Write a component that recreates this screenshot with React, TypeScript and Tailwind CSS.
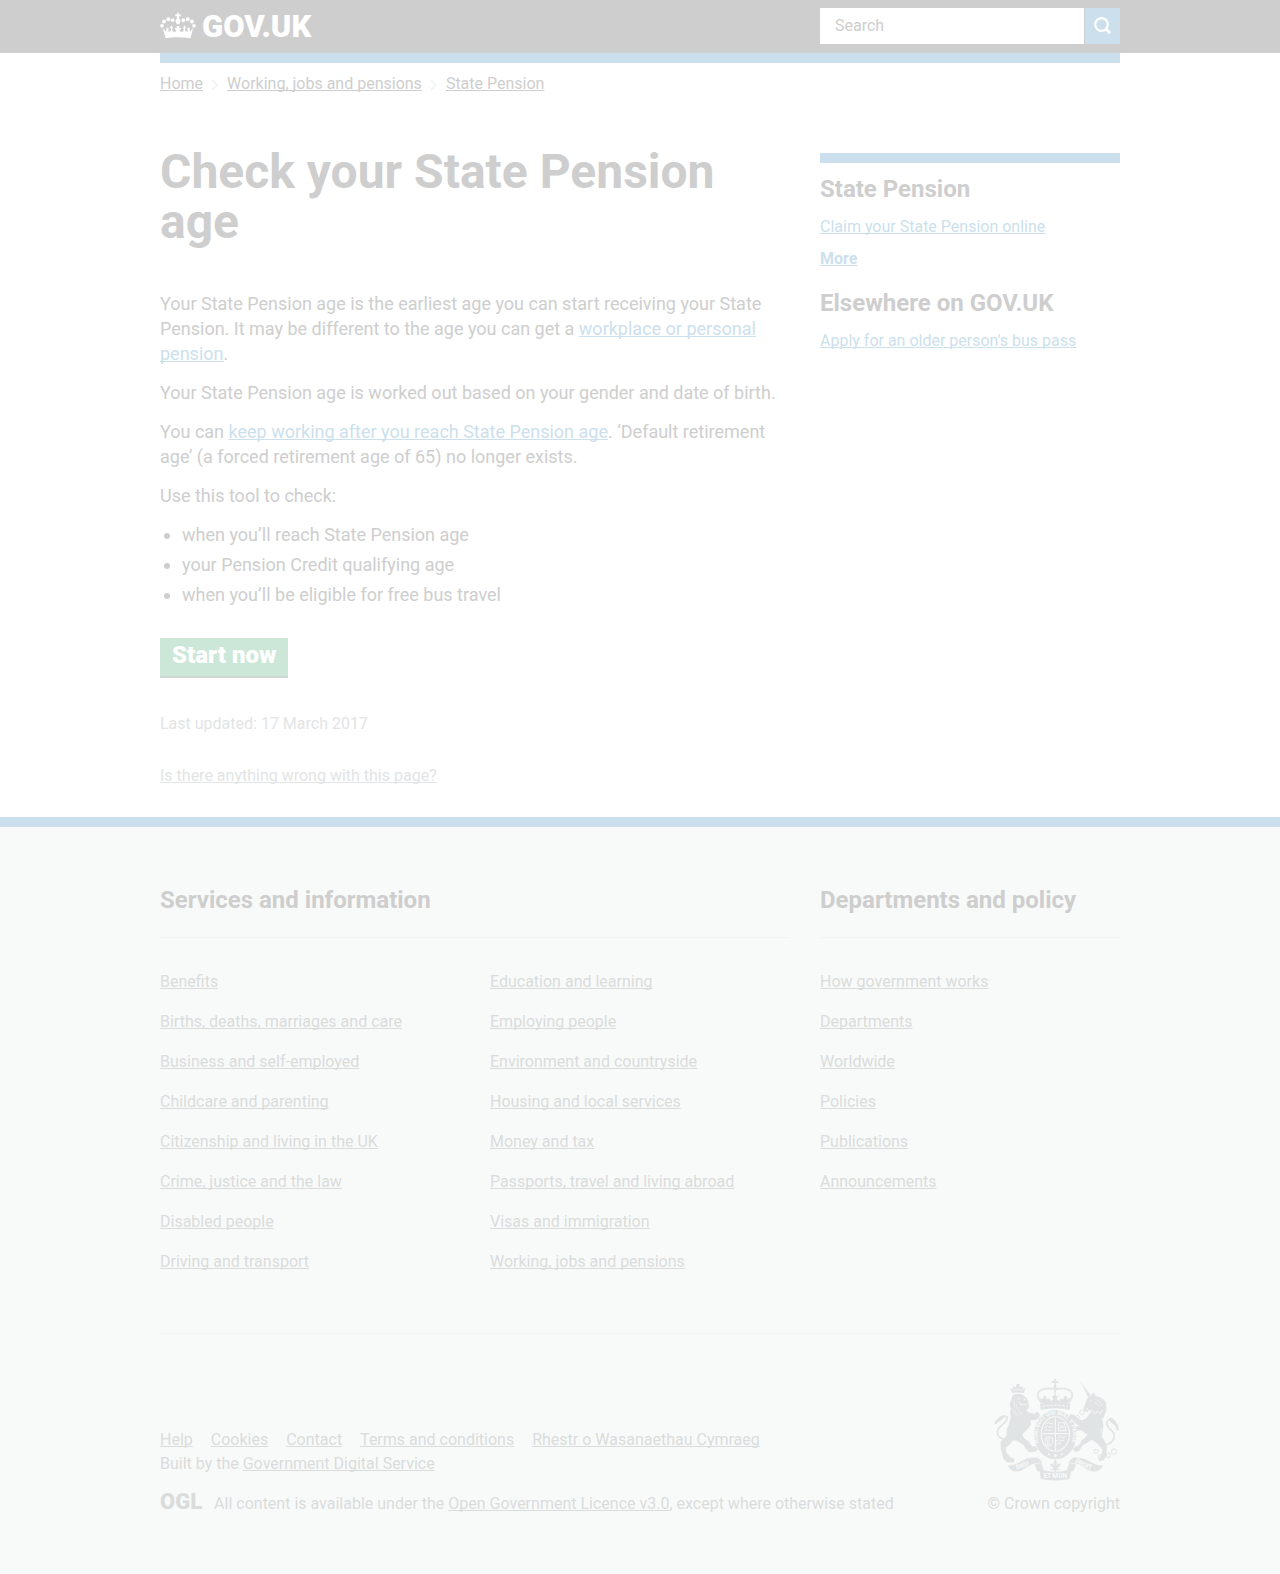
import React from 'react';
import type { ReactNode } from 'react';

const services: string[] = [
  'Benefits',
  'Births, deaths, marriages and care',
  'Business and self-employed',
  'Childcare and parenting',
  'Citizenship and living in the UK',
  'Crime, justice and the law',
  'Disabled people',
  'Driving and transport',
];

const moreServices: string[] = [
  'Education and learning',
  'Employing people',
  'Environment and countryside',
  'Housing and local services',
  'Money and tax',
  'Passports, travel and living abroad',
  'Visas and immigration',
  'Working, jobs and pensions',
];

const departments: string[] = [
  'How government works',
  'Departments',
  'Worldwide',
  'Policies',
  'Publications',
  'Announcements',
];

const metaLinks: string[] = ['Help', 'Cookies', 'Contact', 'Terms and conditions', 'Rhestr o Wasanaethau Cymraeg'];

function Container({ children }: { children: ReactNode }) {
  return <div className="mx-auto max-w-[960px]">{children}</div>;
}

function A({ children, className = '' }: { children: ReactNode; className?: string }) {
  return (
    <a href="#" className={`underline underline-offset-1 [text-decoration-skip-ink:none] ${className}`}>
      {children}
    </a>
  );
}

function Crown() {
  return (
    <svg viewBox="0 0 108 80" className="h-[27px] w-9" fill="#fff" aria-hidden="true">
      <path d="M51 2h6l-1 5 6-1v7l-6-1 2 8c4 3 4 9 1 13l-2 3h-6l-2-3c-3-4-3-10 1-13l2-8-6 1V6l6 1z" />
      <circle cx="38" cy="24" r="5.5" />
      <circle cx="25" cy="21" r="6" />
      <circle cx="12" cy="28" r="6" />
      <circle cx="6" cy="41" r="5.5" />
      <circle cx="70" cy="24" r="5.5" />
      <circle cx="83" cy="21" r="6" />
      <circle cx="96" cy="28" r="6" />
      <circle cx="102" cy="41" r="5.5" />
      <path d="M8 47l9 11 3-11 6 0-1 12 7-2 1-7-3-3 4-8 5 8-3 4 3 8 8 0 2-6-4-1v-5l6 1-2-6h10l-2 6 6-1v5l-4 1 2 6 8 0 3-8-3-4 5-8 4 8-3 3 1 7 7 2-1-12h6l3 11 9-11-9 31c-25-4-53-4-74 0z" />
    </svg>
  );
}

function Crest() {
  const bg = '#f8faf9';
  const ink = '#e1e4e4';
  return (
    <svg viewBox="42 24 381 312" className="h-[104px] w-[127px]" fill={ink} role="img" aria-label="Royal coat of arms">
      <defs>
        <path id="garter" d="M190 238A53 62 0 1 1 268 238" />
        <path id="dieu" d="M99 301Q134 297 164 274" />
        <path id="droit" d="M286 274Q318 297 356 301" />
      </defs>

      {/* lion */}
      <path d="M100 70l-6-16 8 3 1-9 8 4 2-10h8l2 10 8-4 1 9 8-3-6 16q-17-5-34 0z" />
      <path d="M102 61q15-4 30-1" stroke={bg} strokeWidth="2" fill="none" />
      <path
        stroke={ink}
        strokeWidth="5"
        strokeLinejoin="round"
        d="M103 77q14-6 28 0l9 8 6 12-3 6 5 3-2 9-8 3q2 8 10 12l18 4 8-5 6 5-2 7-10 7-18-3q5 8 3 18l-10 14-14 12q-2 10 4 17l16 12 9 14 10-1 5 6-3 5-18 2-10-9-6-12-24-14-10-1-10 12-14 12 2 16 12 16 11 3v8H85l-9-9-8-30-1-16 4-8 14-14q-2-20 7-34l6-22q-4-14 0-26l-3-14z"
      />
      <path d="M114 84l9 3m10 0l6 1m-20 7l4 7 10 3 8-2" stroke={bg} strokeWidth="2.5" fill="none" />
      <path d="M106 92q-4 12 2 20m3-12q0 12 7 17m-14 4q4 10 12 14m3-13q4 7 11 10" stroke={bg} strokeWidth="1.5" fill="none" />
      <path d="M88 207q-25 3-32-14-4-15 12-27 17-13 17-24-4-7-15 0-14 9-20 18" stroke={ink} strokeWidth="5" fill="none" />
      <path d="M44 166q4-15 16-24 8-6 17-7-1 10-10 15-12 6-23 16z" />

      {/* unicorn */}
      <path d="M303 33l32 42-8 5z" />
      <path d="M309 48l4-4m0 10l5-4m0 10l5-4m0 11l5-4" stroke={bg} strokeWidth="1.5" />
      <path
        stroke={ink}
        strokeWidth="4"
        strokeLinejoin="round"
        d="M328 83l8-4 8-9 3 9q20 3 31 17 3 12 2 24l-6 17q-3 7-8 10 8 14 4 32l-4 20 10 16 6 18-3 24-6 12-11 3-2-6 8-8 4-20-14-18-20-14-12 10-16 8-10 16-10 4-6-6 5-6 11-4 10-16 12-10 6-10q-12-4-18-14l-14 2-12 8-8-6 2-6 7 0 12-6 8-6-10-2-14-14-10-6 4-7 9 1 10 10 14 8 16-8 12-18 4-12-8 4-8 5-7-3-1-8z"
      />
      <path d="M324 115l9 12 7-6 7 11 8-9 7 8 10-10" stroke={bg} strokeWidth="3" fill="none" />
      <circle cx="334" cy="91" r="2" fill={bg} />
      <path d="M349 88q14 5 22 20m-26-11q12 4 18 14" stroke={bg} strokeWidth="1.5" fill="none" />
      <path d="M374 222q18 4 28-12 10-14-3-27-16-14-16-25 4-12 16-5 14 11 17 28" stroke={ink} strokeWidth="5" fill="none" />
      <path d="M388 146q10-8 20 6 12 13 12 30-8-14-18-20-9-6-14-16z" />
      <g fill="none" stroke={ink} strokeWidth="3">
        <circle cx="309" cy="127" r="7" />
        <circle cx="296" cy="141" r="5" />
        <circle cx="372" cy="181" r="6" stroke={bg} strokeWidth="2" />
        <circle cx="351" cy="244" r="6" />
        <circle cx="364" cy="260" r="6" />
        <circle cx="388" cy="256" r="7" />
        <circle cx="405" cy="245" r="8" />
      </g>

      {/* imperial crown */}
      <path d="M225 27h6l-1 7 8-1v7l-8-1 1 7q4 5 0 10h-6q-4-5 0-10l1-7-8 1v-7l8 1z" />
      <path d="M188 98q-20-22-6-35 16-12 46-5 30-7 46 5 14 13-6 35" stroke={ink} strokeWidth="6" strokeDasharray="5 1" fill="none" />
      <path d="M228 56v24" stroke={ink} strokeWidth="6" strokeDasharray="5 1" />
      <path d="M186 99l-3-16 8 5 2-9 8 0 2 9 8-3 4 8 8-5-5-10h20l-5 10 8 5 4-8 8 3 2-9h8l2 9 8-5-3 16z" />
      <path d="M183 101q45-10 91 0l-2 18q-44-9-87 0z" />
      <path d="M190 109q38-7 77 0" stroke={bg} strokeWidth="3" strokeDasharray="8 4" fill="none" />

      {/* garter and shield */}
      <ellipse cx="229" cy="194" rx="64" ry="74" />
      <ellipse cx="229" cy="192" rx="44" ry="53" fill={bg} />
      <ellipse cx="229" cy="192" rx="41" ry="50" />
      <text fill={bg} fontFamily="Roboto, sans-serif" fontWeight="700" fontSize="17" textAnchor="middle">
        <textPath href="#garter" startOffset="50%">HONI SOIT QUI MAL Y PENSE</textPath>
      </text>
      <path d="M229 143v98M189 191h80" stroke={bg} strokeWidth="3" />
      <path
        d="M200 163l8-6 5 5 10-3m-27 14l9-5 6 4 11-3m-25 14l8-5 6 4 9-3m16 25l8-6 5 5 10-3m-29 14l9-5 6 4 10-3m-23 14l8-5 6 4"
        stroke={bg}
        strokeWidth="2.5"
        fill="none"
      />
      <path d="M239 158h16l7 24h-23zM244 178l4-13 7 11" stroke={bg} strokeWidth="2.5" fill="none" />
      <path d="M198 202q10-3 22 0v16q-3 9-11 13-9-5-11-13zM204 203l2 24m5-25l-1 25" stroke={bg} strokeWidth="2.5" fill="none" />
      <circle cx="210" cy="253" r="3" fill={bg} />
      <circle cx="229" cy="257" r="4" fill={bg} />
      <circle cx="248" cy="253" r="3" fill={bg} />

      {/* motto ribbon */}
      <path d="M84 286q20 2 42-12 22-14 50-12l16 16-14 2q-20 0-37 14-18 14-38 10-12-6-19-18z" stroke={bg} />
      <path d="M374 286q-20 2-42-12-22-14-50-12l-16 16 14 2q20 0 37 14 18 14 38 10 12-6 19-18z" stroke={bg} />
      <path d="M166 283l22-5 6 22q35 9 70 0l6-22 22 5-8 20-8 2-3 22q-44 10-88 0l-3-22-8-2z" stroke={bg} />
      <path d="M229 266q8 10 3 19 5-8 12-3 3 8-8 10v4h8v4h-10l-5 8-5-8h-10v-4h8v-4q-11-2-8-10 7-5 12 3-5-9 3-19z" stroke={bg} />
      <g fill={bg} fontFamily="Roboto, sans-serif" fontWeight="700" fontSize="19">
        <text>
          <textPath href="#dieu" startOffset="14">DIEU</textPath>
        </text>
        <text>
          <textPath href="#droit" startOffset="2">DROIT</textPath>
        </text>
        <text x="229" y="325" textAnchor="middle">ET MON</text>
      </g>
    </svg>
  );
}

function LinkList({ items, label }: { items: string[]; label: string }) {
  return (
    <ul aria-label={label} className="flex flex-col gap-5 text-base leading-5 text-[#dadcdc]">
      {items.map((item) => (
        <li key={item}>
          <A>{item}</A>
        </li>
      ))}
    </ul>
  );
}

export default function App() {
  return (
    <div className="min-h-screen bg-white font-[Roboto,sans-serif] text-[#cecece]">
      <header className="bg-[#cecece]">
        <Container>
          <div className="grid h-[53px] grid-cols-3 gap-[30px]">
            <a href="#" className="col-span-2 flex items-start gap-1.5 pt-3 text-white">
              <Crown />
              <span className="text-[31px] leading-[29px] font-black">GOV.UK</span>
            </a>
            <form className="flex h-11 gap-px pt-2" role="search" onSubmit={(e) => e.preventDefault()}>
              <input
                type="search"
                aria-label="Search"
                placeholder="Search"
                className="min-w-0 flex-1 bg-white px-[15px] text-base text-[#aaa] outline-none placeholder:text-[#cecece]"
              />
              <button type="submit" aria-label="Search GOV.UK" className="flex w-[35px] items-center justify-center bg-[#ccdfed]">
                <svg viewBox="0 0 18 18" className="size-[18px]" fill="none" stroke="#fff" aria-hidden="true">
                  <circle cx="7.5" cy="7.5" r="6.3" strokeWidth="2.2" />
                  <path d="M11.8 11.8l4.4 4.4" strokeWidth="3" />
                </svg>
              </button>
            </form>
          </div>
        </Container>
      </header>

      <Container>
        <div className="h-2.5 bg-[#ccdfed]" />
        <nav aria-label="Breadcrumb" className="pt-[11px]">
          <ol className="flex text-base leading-5">
            {['Home', 'Working, jobs and pensions', 'State Pension'].map((crumb, i) => (
              <li key={crumb} className="flex items-center">
                {i > 0 && (
                  <svg viewBox="0 0 8 12" className="mx-2 mt-0.5 h-3 w-2" fill="none" stroke="#f2f3f3" strokeWidth="1.5" aria-hidden="true">
                    <path d="M1 1l5 5-5 5" />
                  </svg>
                )}
                <A>{crumb}</A>
              </li>
            ))}
          </ol>
        </nav>

        <div className="grid grid-cols-3 gap-[30px] pt-[53px] pb-[31px]">
          <main className="col-span-2">
            <h1 className="pr-[30px] text-[48px] leading-[50px] font-bold">Check your State Pension age</h1>
            <div className="mt-11 flex flex-col gap-3.5 text-lg leading-[25px]">
              <p>
                Your State Pension age is the earliest age you can start receiving your State Pension. It may be
                different to the age you can get a <A className="text-[#ccdfed]">workplace or personal pension</A>.
              </p>
              <p>Your State Pension age is worked out based on your gender and date of birth.</p>
              <p>
                You can <A className="text-[#ccdfed]">keep working after you reach State Pension age</A>. ‘Default
                retirement age’ (a forced retirement age of 65) no longer exists.
              </p>
              <p>Use this tool to check:</p>
              <ul className="flex list-disc flex-col gap-[5px] pl-[22px]">
                <li>when you’ll reach State Pension age</li>
                <li>your Pension Credit qualifying age</li>
                <li>when you’ll be eligible for free bus travel</li>
              </ul>
            </div>
            <button
              type="button"
              className="mt-[31px] block h-10 border-b-2 border-[#cdd6d1] bg-[#cce7d8] px-3 pb-1 text-2xl leading-[30px] font-black text-white"
            >
              Start now
            </button>
            <div className="flex flex-col gap-8 pt-9 text-base leading-5 text-[#e2e4e5]">
              <p>Last updated: 17 March 2017</p>
              <p>
                <A>Is there anything wrong with this page?</A>
              </p>
            </div>
          </main>

          <aside className="mt-1.5 self-start border-t-[10px] border-[#ccdfed] pt-[11px] text-base leading-5">
            <h2 className="text-2xl leading-[30px] font-bold">State Pension</h2>
            <ul className="mt-[13px] flex flex-col gap-3 text-[#ccdfed]">
              <li>
                <A>Claim your State Pension online</A>
              </li>
              <li>
                <A className="font-bold">More</A>
              </li>
            </ul>
            <h2 className="mt-[19px] text-2xl leading-[30px] font-bold">Elsewhere on GOV.UK</h2>
            <p className="mt-[13px] text-[#ccdfed]">
              <A>Apply for an older person's bus pass</A>
            </p>
          </aside>
        </div>
      </Container>

      <footer className="border-t-[10px] border-[#ccdfed] bg-[#f8faf9] pb-[60px]">
        <Container>
          <div className="grid grid-cols-3 gap-x-[30px] pt-[58px]">
            <section className="col-span-2">
              <h2 className="border-b border-[#f2f3f3] pb-[22px] text-2xl leading-[30px] font-bold">Services and information</h2>
              <div className="grid grid-cols-2 gap-[30px] pt-[34px]">
                <LinkList items={services} label="Services" />
                <LinkList items={moreServices} label="More services" />
              </div>
            </section>
            <section>
              <h2 className="border-b border-[#f2f3f3] pb-[22px] text-2xl leading-[30px] font-bold">Departments and policy</h2>
              <div className="pt-[34px]">
                <LinkList items={departments} label="Departments and policy" />
              </div>
            </section>
          </div>

          <div className="mt-[61px] flex items-end justify-between border-t border-[#f2f3f3] pt-[44px] text-base leading-5 text-[#dadcdc]">
            <div>
              <ul className="flex gap-[18px]">
                {metaLinks.map((link) => (
                  <li key={link}>
                    <A>{link}</A>
                  </li>
                ))}
              </ul>
              <p className="mt-1">
                Built by the <A>Government Digital Service</A>
              </p>
              <div className="mt-5 flex gap-3">
                <span className="text-[22px] leading-4 font-black">OGL</span>
                <p>
                  All content is available under the <A>Open Government Licence v3.0</A>, except where otherwise stated
                </p>
              </div>
            </div>
            <a href="#" className="flex flex-col items-end gap-3">
              <Crest />
              <span>© Crown copyright</span>
            </a>
          </div>
        </Container>
      </footer>
    </div>
  );
}
